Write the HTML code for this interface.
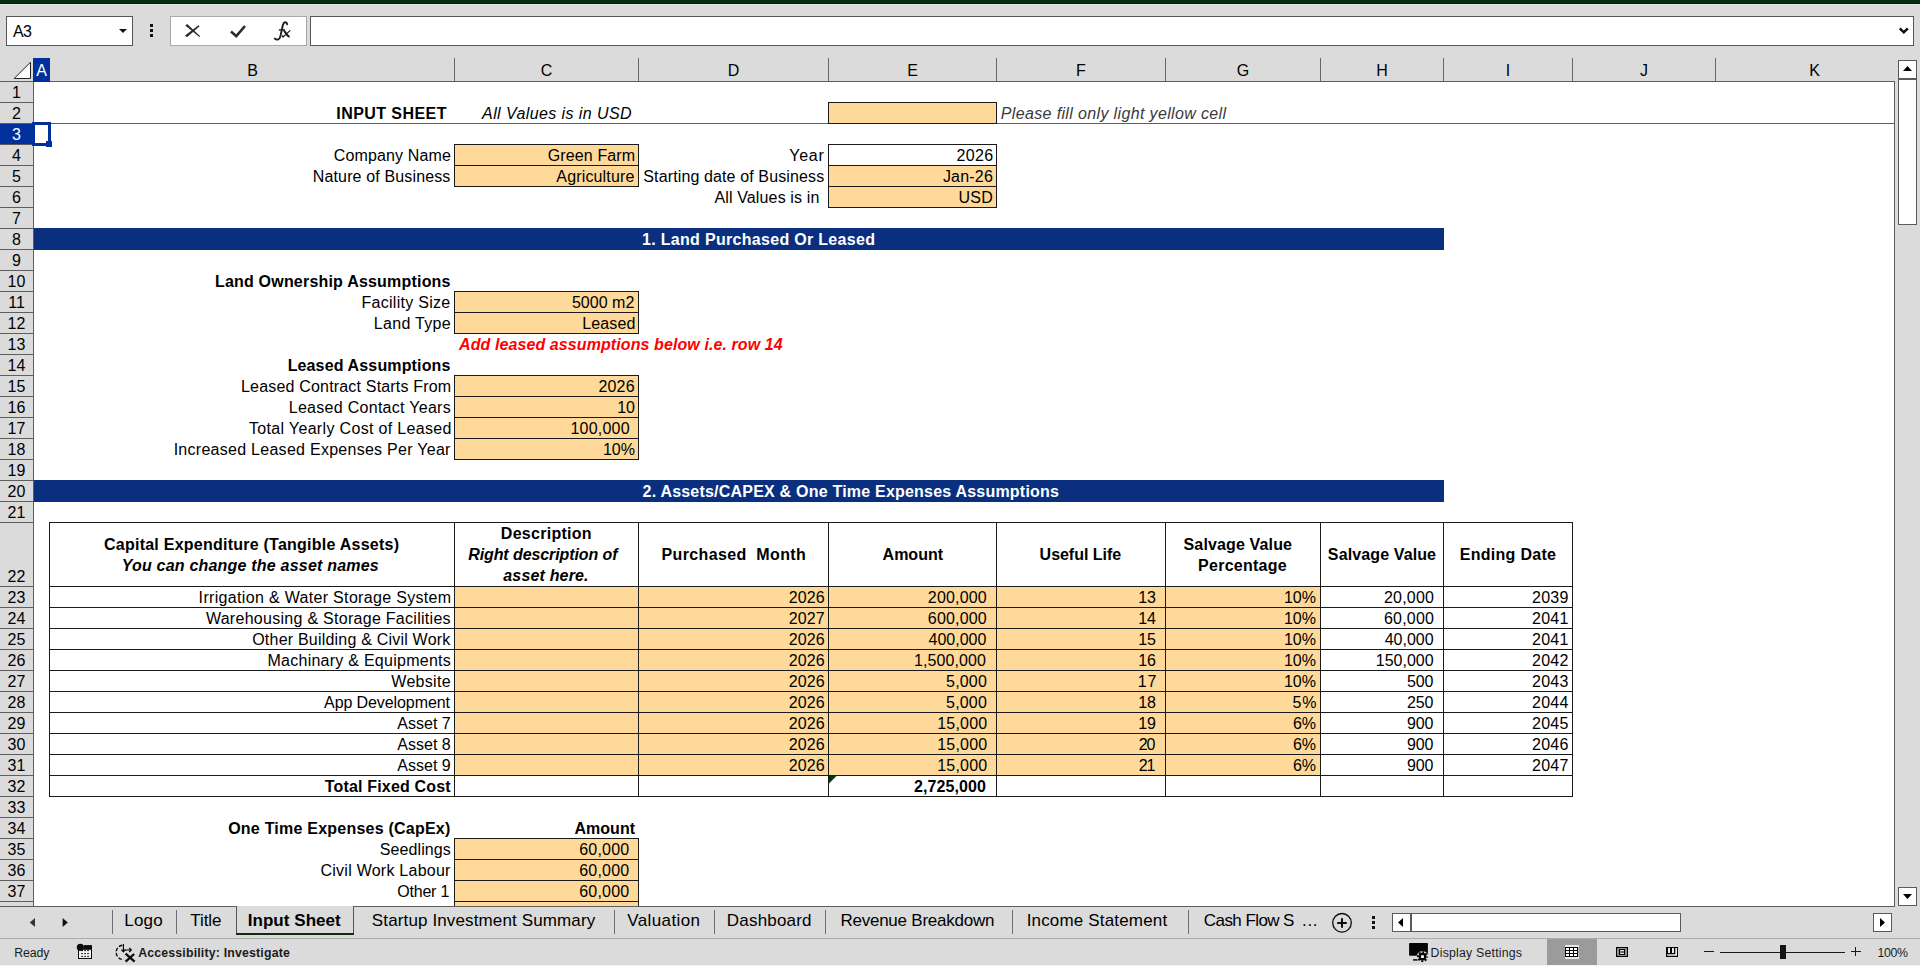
<!DOCTYPE html>
<html><head><meta charset="utf-8"><title>Input Sheet</title>
<style>
html,body{margin:0;padding:0;width:1920px;height:966px;overflow:hidden}
body{width:1920px;height:966px;overflow:hidden;background:#dbdbdb;position:relative;font-family:"Liberation Sans",sans-serif;}
body>div,body>svg{position:absolute;box-sizing:content-box}
.t{white-space:nowrap;overflow:visible}
</style></head><body>
<div style="left:0px;top:0px;width:1920px;height:3px;background:#062c12;"></div>
<div style="left:0px;top:3px;width:1920px;height:1px;background:#011d02;"></div>
<div style="left:0px;top:4px;width:1920px;height:1px;background:#e6e4e5;"></div>
<div style="left:6px;top:16px;width:125px;height:28px;border:1px solid #565656;background:#fff"></div>
<div class="t" style="left:13px;top:23px;width:40px;height:18px;line-height:18px;font-size:16px;text-align:left;color:#000;letter-spacing:-0.6px;"><span>A3</span></div>
<svg style="left:118px;top:28px" width="10" height="6" viewBox="0 0 10 6"><path d="M1 1 L9 1 L5 5 Z" fill="#111"/></svg>
<div style="left:150px;top:24px;width:3px;height:3px;background:#111;"></div>
<div style="left:150px;top:29px;width:3px;height:3px;background:#111;"></div>
<div style="left:150px;top:34px;width:3px;height:3px;background:#111;"></div>
<div style="left:170px;top:16px;width:135px;height:28px;border:1px solid #a9a9a9;background:#fff"></div>
<svg style="left:184px;top:23px" width="18" height="16" viewBox="0 0 18 16"><path d="M1.2 2.6 L3.2 0.9 L16.2 13.2 L15.4 14 Z" fill="#2b2b2b"/><path d="M14.6 2.2 L15.6 3.2 L3 14.2 L1 12.6 Z" fill="#2b2b2b"/></svg>
<svg style="left:228px;top:23px" width="20" height="17" viewBox="0 0 20 17"><path d="M3 8.5 L8.3 13.2 L17 3" stroke="#2b2b2b" stroke-width="2.6" fill="none" stroke-linecap="butt"/></svg>
<svg style="left:270px;top:18px" width="24" height="26" viewBox="0 0 24 26"><path d="M17.2 6.2 C16.6 3.4 13.7 3.6 12.9 7 L10.3 18.6 C9.5 21.9 6.8 22.3 4.8 20.6" fill="none" stroke="#1a1a1a" stroke-width="1.9" stroke-linecap="round"/><path d="M8.8 11.9 L15 11.9" stroke="#1a1a1a" stroke-width="1.3"/><path d="M13.4 12.9 C15.8 12.4 16.2 18.9 19.6 18.4" fill="none" stroke="#1a1a1a" stroke-width="2.1"/><path d="M20 12.6 L13.2 18.9" stroke="#1a1a1a" stroke-width="1.2" stroke-linecap="round"/><circle cx="12.9" cy="18.3" r="1.1" fill="#1a1a1a"/></svg>
<div style="left:310px;top:16px;width:1602px;height:28px;border:1px solid #565656;background:#fff"></div>
<svg style="left:1896px;top:26px" width="14" height="10" viewBox="0 0 14 10"><path d="M3.8 2.4 L7.8 6.4 L11.8 2.4" stroke="#0a0a0a" stroke-width="2.4" fill="none"/></svg>
<div style="left:34px;top:82px;width:1860px;height:824px;background:#fff;"></div>
<div style="left:0px;top:81px;width:1895px;height:1px;background:#5e5e5e;"></div>
<div style="left:33px;top:81px;width:1px;height:826px;background:#5e5e5e;"></div>
<div style="left:1894px;top:81px;width:1px;height:826px;background:#5e5e5e;"></div>
<div style="left:0px;top:906px;width:1895px;height:1px;background:#5e5e5e;"></div>
<div style="left:33px;top:58px;width:17px;height:24px;background:#00309c;"></div>
<div class="t" style="left:33px;top:60px;width:17px;height:22px;line-height:22px;font-size:16px;text-align:center;color:#fff;"><span>A</span></div>
<div class="t" style="left:51px;top:60px;width:403px;height:22px;line-height:22px;font-size:16px;text-align:center;color:#000;"><span>B</span></div>
<div style="left:454px;top:58px;width:1px;height:23px;background:#666;"></div>
<div class="t" style="left:455px;top:60px;width:183px;height:22px;line-height:22px;font-size:16px;text-align:center;color:#000;"><span>C</span></div>
<div style="left:638px;top:58px;width:1px;height:23px;background:#666;"></div>
<div class="t" style="left:639px;top:60px;width:189px;height:22px;line-height:22px;font-size:16px;text-align:center;color:#000;"><span>D</span></div>
<div style="left:828px;top:58px;width:1px;height:23px;background:#666;"></div>
<div class="t" style="left:829px;top:60px;width:167px;height:22px;line-height:22px;font-size:16px;text-align:center;color:#000;"><span>E</span></div>
<div style="left:996px;top:58px;width:1px;height:23px;background:#666;"></div>
<div class="t" style="left:997px;top:60px;width:168px;height:22px;line-height:22px;font-size:16px;text-align:center;color:#000;"><span>F</span></div>
<div style="left:1165px;top:58px;width:1px;height:23px;background:#666;"></div>
<div class="t" style="left:1166px;top:60px;width:154px;height:22px;line-height:22px;font-size:16px;text-align:center;color:#000;"><span>G</span></div>
<div style="left:1320px;top:58px;width:1px;height:23px;background:#666;"></div>
<div class="t" style="left:1321px;top:60px;width:122px;height:22px;line-height:22px;font-size:16px;text-align:center;color:#000;"><span>H</span></div>
<div style="left:1443px;top:58px;width:1px;height:23px;background:#666;"></div>
<div class="t" style="left:1444px;top:60px;width:128px;height:22px;line-height:22px;font-size:16px;text-align:center;color:#000;"><span>I</span></div>
<div style="left:1572px;top:58px;width:1px;height:23px;background:#666;"></div>
<div class="t" style="left:1573px;top:60px;width:142px;height:22px;line-height:22px;font-size:16px;text-align:center;color:#000;"><span>J</span></div>
<div style="left:1715px;top:58px;width:1px;height:23px;background:#666;"></div>
<div class="t" style="left:1716px;top:60px;width:197px;height:22px;line-height:22px;font-size:16px;text-align:center;color:#000;"><span>K</span></div>
<svg style="left:12px;top:60px" width="21" height="21" viewBox="0 0 21 21"><path d="M2.2 18.5 L18.5 2.2 L18.5 18.5 Z" fill="#fff" stroke="#222" stroke-width="1"/></svg>
<div style="left:0px;top:102px;width:34px;height:1px;background:#5e5e5e;"></div>
<div class="t" style="left:0px;top:82px;width:33px;height:21px;line-height:21px;font-size:16px;text-align:center;color:#000;"><span>1</span></div>
<div style="left:0px;top:123px;width:34px;height:1px;background:#5e5e5e;"></div>
<div class="t" style="left:0px;top:103px;width:33px;height:21px;line-height:21px;font-size:16px;text-align:center;color:#000;"><span>2</span></div>
<div style="left:0px;top:124px;width:34px;height:20px;background:#00309c;"></div>
<div style="left:0px;top:144px;width:34px;height:1px;background:#5f5a55;"></div>
<div class="t" style="left:0px;top:124px;width:33px;height:21px;line-height:21px;font-size:16px;text-align:center;color:#fff;"><span>3</span></div>
<div style="left:0px;top:165px;width:34px;height:1px;background:#5e5e5e;"></div>
<div class="t" style="left:0px;top:145px;width:33px;height:21px;line-height:21px;font-size:16px;text-align:center;color:#000;"><span>4</span></div>
<div style="left:0px;top:186px;width:34px;height:1px;background:#5e5e5e;"></div>
<div class="t" style="left:0px;top:166px;width:33px;height:21px;line-height:21px;font-size:16px;text-align:center;color:#000;"><span>5</span></div>
<div style="left:0px;top:207px;width:34px;height:1px;background:#5e5e5e;"></div>
<div class="t" style="left:0px;top:187px;width:33px;height:21px;line-height:21px;font-size:16px;text-align:center;color:#000;"><span>6</span></div>
<div style="left:0px;top:228px;width:34px;height:1px;background:#5e5e5e;"></div>
<div class="t" style="left:0px;top:208px;width:33px;height:21px;line-height:21px;font-size:16px;text-align:center;color:#000;"><span>7</span></div>
<div style="left:0px;top:249px;width:34px;height:1px;background:#5e5e5e;"></div>
<div class="t" style="left:0px;top:229px;width:33px;height:21px;line-height:21px;font-size:16px;text-align:center;color:#000;"><span>8</span></div>
<div style="left:0px;top:270px;width:34px;height:1px;background:#5e5e5e;"></div>
<div class="t" style="left:0px;top:250px;width:33px;height:21px;line-height:21px;font-size:16px;text-align:center;color:#000;"><span>9</span></div>
<div style="left:0px;top:291px;width:34px;height:1px;background:#5e5e5e;"></div>
<div class="t" style="left:0px;top:271px;width:33px;height:21px;line-height:21px;font-size:16px;text-align:center;color:#000;"><span>10</span></div>
<div style="left:0px;top:312px;width:34px;height:1px;background:#5e5e5e;"></div>
<div class="t" style="left:0px;top:292px;width:33px;height:21px;line-height:21px;font-size:16px;text-align:center;color:#000;"><span>11</span></div>
<div style="left:0px;top:333px;width:34px;height:1px;background:#5e5e5e;"></div>
<div class="t" style="left:0px;top:313px;width:33px;height:21px;line-height:21px;font-size:16px;text-align:center;color:#000;"><span>12</span></div>
<div style="left:0px;top:354px;width:34px;height:1px;background:#5e5e5e;"></div>
<div class="t" style="left:0px;top:334px;width:33px;height:21px;line-height:21px;font-size:16px;text-align:center;color:#000;"><span>13</span></div>
<div style="left:0px;top:375px;width:34px;height:1px;background:#5e5e5e;"></div>
<div class="t" style="left:0px;top:355px;width:33px;height:21px;line-height:21px;font-size:16px;text-align:center;color:#000;"><span>14</span></div>
<div style="left:0px;top:396px;width:34px;height:1px;background:#5e5e5e;"></div>
<div class="t" style="left:0px;top:376px;width:33px;height:21px;line-height:21px;font-size:16px;text-align:center;color:#000;"><span>15</span></div>
<div style="left:0px;top:417px;width:34px;height:1px;background:#5e5e5e;"></div>
<div class="t" style="left:0px;top:397px;width:33px;height:21px;line-height:21px;font-size:16px;text-align:center;color:#000;"><span>16</span></div>
<div style="left:0px;top:438px;width:34px;height:1px;background:#5e5e5e;"></div>
<div class="t" style="left:0px;top:418px;width:33px;height:21px;line-height:21px;font-size:16px;text-align:center;color:#000;"><span>17</span></div>
<div style="left:0px;top:459px;width:34px;height:1px;background:#5e5e5e;"></div>
<div class="t" style="left:0px;top:439px;width:33px;height:21px;line-height:21px;font-size:16px;text-align:center;color:#000;"><span>18</span></div>
<div style="left:0px;top:480px;width:34px;height:1px;background:#5e5e5e;"></div>
<div class="t" style="left:0px;top:460px;width:33px;height:21px;line-height:21px;font-size:16px;text-align:center;color:#000;"><span>19</span></div>
<div style="left:0px;top:501px;width:34px;height:1px;background:#5e5e5e;"></div>
<div class="t" style="left:0px;top:481px;width:33px;height:21px;line-height:21px;font-size:16px;text-align:center;color:#000;"><span>20</span></div>
<div style="left:0px;top:522px;width:34px;height:1px;background:#5e5e5e;"></div>
<div class="t" style="left:0px;top:502px;width:33px;height:21px;line-height:21px;font-size:16px;text-align:center;color:#000;"><span>21</span></div>
<div style="left:0px;top:586px;width:34px;height:1px;background:#5e5e5e;"></div>
<div class="t" style="left:0px;top:566px;width:33px;height:21px;line-height:21px;font-size:16px;text-align:center;color:#000;"><span>22</span></div>
<div style="left:0px;top:607px;width:34px;height:1px;background:#5e5e5e;"></div>
<div class="t" style="left:0px;top:587px;width:33px;height:21px;line-height:21px;font-size:16px;text-align:center;color:#000;"><span>23</span></div>
<div style="left:0px;top:628px;width:34px;height:1px;background:#5e5e5e;"></div>
<div class="t" style="left:0px;top:608px;width:33px;height:21px;line-height:21px;font-size:16px;text-align:center;color:#000;"><span>24</span></div>
<div style="left:0px;top:649px;width:34px;height:1px;background:#5e5e5e;"></div>
<div class="t" style="left:0px;top:629px;width:33px;height:21px;line-height:21px;font-size:16px;text-align:center;color:#000;"><span>25</span></div>
<div style="left:0px;top:670px;width:34px;height:1px;background:#5e5e5e;"></div>
<div class="t" style="left:0px;top:650px;width:33px;height:21px;line-height:21px;font-size:16px;text-align:center;color:#000;"><span>26</span></div>
<div style="left:0px;top:691px;width:34px;height:1px;background:#5e5e5e;"></div>
<div class="t" style="left:0px;top:671px;width:33px;height:21px;line-height:21px;font-size:16px;text-align:center;color:#000;"><span>27</span></div>
<div style="left:0px;top:712px;width:34px;height:1px;background:#5e5e5e;"></div>
<div class="t" style="left:0px;top:692px;width:33px;height:21px;line-height:21px;font-size:16px;text-align:center;color:#000;"><span>28</span></div>
<div style="left:0px;top:733px;width:34px;height:1px;background:#5e5e5e;"></div>
<div class="t" style="left:0px;top:713px;width:33px;height:21px;line-height:21px;font-size:16px;text-align:center;color:#000;"><span>29</span></div>
<div style="left:0px;top:754px;width:34px;height:1px;background:#5e5e5e;"></div>
<div class="t" style="left:0px;top:734px;width:33px;height:21px;line-height:21px;font-size:16px;text-align:center;color:#000;"><span>30</span></div>
<div style="left:0px;top:775px;width:34px;height:1px;background:#5e5e5e;"></div>
<div class="t" style="left:0px;top:755px;width:33px;height:21px;line-height:21px;font-size:16px;text-align:center;color:#000;"><span>31</span></div>
<div style="left:0px;top:796px;width:34px;height:1px;background:#5e5e5e;"></div>
<div class="t" style="left:0px;top:776px;width:33px;height:21px;line-height:21px;font-size:16px;text-align:center;color:#000;"><span>32</span></div>
<div style="left:0px;top:817px;width:34px;height:1px;background:#5e5e5e;"></div>
<div class="t" style="left:0px;top:797px;width:33px;height:21px;line-height:21px;font-size:16px;text-align:center;color:#000;"><span>33</span></div>
<div style="left:0px;top:838px;width:34px;height:1px;background:#5e5e5e;"></div>
<div class="t" style="left:0px;top:818px;width:33px;height:21px;line-height:21px;font-size:16px;text-align:center;color:#000;"><span>34</span></div>
<div style="left:0px;top:859px;width:34px;height:1px;background:#5e5e5e;"></div>
<div class="t" style="left:0px;top:839px;width:33px;height:21px;line-height:21px;font-size:16px;text-align:center;color:#000;"><span>35</span></div>
<div style="left:0px;top:880px;width:34px;height:1px;background:#5e5e5e;"></div>
<div class="t" style="left:0px;top:860px;width:33px;height:21px;line-height:21px;font-size:16px;text-align:center;color:#000;"><span>36</span></div>
<div style="left:0px;top:901px;width:34px;height:1px;background:#5e5e5e;"></div>
<div class="t" style="left:0px;top:881px;width:33px;height:21px;line-height:21px;font-size:16px;text-align:center;color:#000;"><span>37</span></div>
<div class="t" style="left:0px;top:902px;width:33px;height:21px;line-height:21px;font-size:16px;text-align:center;color:#000;clip-path:inset(0 0 17px 0);"><span>38</span></div>
<div style="left:34px;top:123px;width:1860px;height:1px;background:#5f5f5f;"></div>
<div class="t" style="left:45.9px;top:103px;width:401px;height:21px;line-height:21px;font-size:16px;text-align:right;color:#000;font-weight:bold;letter-spacing:0.44px;"><span>INPUT SHEET</span></div>
<div class="t" style="left:482.05px;top:103px;width:200px;height:21px;line-height:21px;font-size:16px;text-align:left;color:#000;font-style:italic;letter-spacing:0.416px;"><span>All Values is in USD</span></div>
<div style="left:829px;top:103px;width:167px;height:20px;background:#fed999;"></div>
<div style="left:828px;top:102px;width:169px;height:1px;background:#1a1a1a;"></div>
<div style="left:828px;top:123px;width:169px;height:1px;background:#1a1a1a;"></div>
<div style="left:828px;top:102px;width:1px;height:22px;background:#1a1a1a;"></div>
<div style="left:996px;top:102px;width:1px;height:22px;background:#1a1a1a;"></div>
<div class="t" style="left:1000.75px;top:103px;width:600px;height:21px;line-height:21px;font-size:16px;text-align:left;color:#3a3a3a;font-style:italic;letter-spacing:0.361px;"><span>Please fill only light yellow cell</span></div>
<div class="t" style="left:50.0px;top:145px;width:401px;height:21px;line-height:21px;font-size:16px;text-align:right;color:#000;letter-spacing:0.127px;"><span>Company Name</span></div>
<div style="left:455px;top:145px;width:183px;height:20px;background:#fed999;"></div>
<div style="left:454px;top:144px;width:185px;height:1px;background:#1a1a1a;"></div>
<div style="left:454px;top:165px;width:185px;height:1px;background:#1a1a1a;"></div>
<div style="left:454px;top:144px;width:1px;height:22px;background:#1a1a1a;"></div>
<div style="left:638px;top:144px;width:1px;height:22px;background:#1a1a1a;"></div>
<div class="t" style="left:454.25px;top:145px;width:181px;height:21px;line-height:21px;font-size:16px;text-align:right;color:#000;letter-spacing:0.122px;"><span>Green Farm</span></div>
<div class="t" style="left:49.5px;top:166px;width:401px;height:21px;line-height:21px;font-size:16px;text-align:right;color:#000;letter-spacing:0.141px;"><span>Nature of Business</span></div>
<div style="left:455px;top:166px;width:183px;height:20px;background:#fed999;"></div>
<div style="left:454px;top:165px;width:185px;height:1px;background:#1a1a1a;"></div>
<div style="left:454px;top:186px;width:185px;height:1px;background:#1a1a1a;"></div>
<div style="left:454px;top:165px;width:1px;height:22px;background:#1a1a1a;"></div>
<div style="left:638px;top:165px;width:1px;height:22px;background:#1a1a1a;"></div>
<div class="t" style="left:453.52px;top:166px;width:181px;height:21px;line-height:21px;font-size:16px;text-align:right;color:#000;letter-spacing:0.155px;"><span>Agriculture</span></div>
<div class="t" style="left:637.65px;top:145px;width:187px;height:21px;line-height:21px;font-size:16px;text-align:right;color:#000;letter-spacing:0.767px;"><span>Year</span></div>
<div style="left:828px;top:144px;width:169px;height:1px;background:#1a1a1a;"></div>
<div style="left:828px;top:165px;width:169px;height:1px;background:#1a1a1a;"></div>
<div style="left:828px;top:144px;width:1px;height:22px;background:#1a1a1a;"></div>
<div style="left:996px;top:144px;width:1px;height:22px;background:#1a1a1a;"></div>
<div class="t" style="left:828.5px;top:145px;width:165px;height:21px;line-height:21px;font-size:16px;text-align:right;color:#000;letter-spacing:0.333px;"><span>2026</span></div>
<div class="t" style="left:637.3px;top:166px;width:187px;height:21px;line-height:21px;font-size:16px;text-align:right;color:#000;letter-spacing:0.125px;"><span>Starting date of Business</span></div>
<div style="left:829px;top:166px;width:167px;height:20px;background:#fed999;"></div>
<div style="left:828px;top:165px;width:169px;height:1px;background:#1a1a1a;"></div>
<div style="left:828px;top:186px;width:169px;height:1px;background:#1a1a1a;"></div>
<div style="left:828px;top:165px;width:1px;height:22px;background:#1a1a1a;"></div>
<div style="left:996px;top:165px;width:1px;height:22px;background:#1a1a1a;"></div>
<div class="t" style="left:828.0px;top:166px;width:165px;height:21px;line-height:21px;font-size:16px;text-align:right;color:#000;letter-spacing:0.2px;"><span>Jan-26</span></div>
<div class="t" style="left:637.15px;top:187px;width:187px;height:21px;line-height:21px;font-size:16px;text-align:right;color:#000;letter-spacing:0.144px;white-space:pre;"><span>All Values is in&nbsp;</span></div>
<div style="left:829px;top:187px;width:167px;height:20px;background:#fed999;"></div>
<div style="left:828px;top:186px;width:169px;height:1px;background:#1a1a1a;"></div>
<div style="left:828px;top:207px;width:169px;height:1px;background:#1a1a1a;"></div>
<div style="left:828px;top:186px;width:1px;height:22px;background:#1a1a1a;"></div>
<div style="left:996px;top:186px;width:1px;height:22px;background:#1a1a1a;"></div>
<div class="t" style="left:828.2px;top:187px;width:165px;height:21px;line-height:21px;font-size:16px;text-align:right;color:#000;letter-spacing:0.3px;"><span>USD</span></div>
<div style="left:34px;top:228px;width:1410px;height:22px;background:#0a2f7f;"></div>
<div class="t" style="left:642.05px;top:229px;width:600px;height:21px;line-height:21px;font-size:16px;text-align:left;color:#fff;font-weight:bold;letter-spacing:0.304px;"><span>1. Land Purchased Or Leased</span></div>
<div style="left:34px;top:480px;width:1410px;height:22px;background:#0a2f7f;"></div>
<div class="t" style="left:642.55px;top:481px;width:600px;height:21px;line-height:21px;font-size:16px;text-align:left;color:#fff;font-weight:bold;letter-spacing:0.211px;"><span>2. Assets/CAPEX &amp; One Time Expenses Assumptions</span></div>
<div class="t" style="left:49.7px;top:271px;width:401px;height:21px;line-height:21px;font-size:16px;text-align:right;color:#000;font-weight:bold;letter-spacing:0.2px;"><span>Land Ownership Assumptions</span></div>
<div class="t" style="left:49.5px;top:292px;width:401px;height:21px;line-height:21px;font-size:16px;text-align:right;color:#000;letter-spacing:0.283px;"><span>Facility Size</span></div>
<div style="left:455px;top:292px;width:183px;height:20px;background:#fed999;"></div>
<div style="left:454px;top:291px;width:185px;height:1px;background:#1a1a1a;"></div>
<div style="left:454px;top:312px;width:185px;height:1px;background:#1a1a1a;"></div>
<div style="left:454px;top:291px;width:1px;height:22px;background:#1a1a1a;"></div>
<div style="left:638px;top:291px;width:1px;height:22px;background:#1a1a1a;"></div>
<div class="t" style="left:453.4px;top:292px;width:181px;height:21px;line-height:21px;font-size:16px;text-align:right;color:#000;letter-spacing:0.033px;"><span>5000 m2</span></div>
<div class="t" style="left:50.0px;top:313px;width:401px;height:21px;line-height:21px;font-size:16px;text-align:right;color:#000;letter-spacing:0.3px;"><span>Land Type</span></div>
<div style="left:455px;top:313px;width:183px;height:20px;background:#fed999;"></div>
<div style="left:454px;top:312px;width:185px;height:1px;background:#1a1a1a;"></div>
<div style="left:454px;top:333px;width:185px;height:1px;background:#1a1a1a;"></div>
<div style="left:454px;top:312px;width:1px;height:22px;background:#1a1a1a;"></div>
<div style="left:638px;top:312px;width:1px;height:22px;background:#1a1a1a;"></div>
<div class="t" style="left:454.6px;top:313px;width:181px;height:21px;line-height:21px;font-size:16px;text-align:right;color:#000;letter-spacing:0.16px;"><span>Leased</span></div>
<div class="t" style="left:459.0px;top:334px;width:600px;height:21px;line-height:21px;font-size:16px;text-align:left;color:#ff0000;font-weight:bold;font-style:italic;letter-spacing:0.092px;"><span>Add leased assumptions below i.e. row 14</span></div>
<div class="t" style="left:49.5px;top:355px;width:401px;height:21px;line-height:21px;font-size:16px;text-align:right;color:#000;font-weight:bold;letter-spacing:0.141px;"><span>Leased Assumptions</span></div>
<div class="t" style="left:50.35px;top:376px;width:401px;height:21px;line-height:21px;font-size:16px;text-align:right;color:#000;letter-spacing:0.181px;"><span>Leased Contract Starts From</span></div>
<div style="left:455px;top:376px;width:183px;height:20px;background:#fed999;"></div>
<div style="left:454px;top:375px;width:185px;height:1px;background:#1a1a1a;"></div>
<div style="left:454px;top:396px;width:185px;height:1px;background:#1a1a1a;"></div>
<div style="left:454px;top:375px;width:1px;height:22px;background:#1a1a1a;"></div>
<div style="left:638px;top:375px;width:1px;height:22px;background:#1a1a1a;"></div>
<div class="t" style="left:453.75px;top:376px;width:181px;height:21px;line-height:21px;font-size:16px;text-align:right;color:#000;letter-spacing:0.167px;"><span>2026</span></div>
<div class="t" style="left:50.0px;top:397px;width:401px;height:21px;line-height:21px;font-size:16px;text-align:right;color:#000;letter-spacing:0.284px;"><span>Leased Contact Years</span></div>
<div style="left:455px;top:397px;width:183px;height:20px;background:#fed999;"></div>
<div style="left:454px;top:396px;width:185px;height:1px;background:#1a1a1a;"></div>
<div style="left:454px;top:417px;width:185px;height:1px;background:#1a1a1a;"></div>
<div style="left:454px;top:396px;width:1px;height:22px;background:#1a1a1a;"></div>
<div style="left:638px;top:396px;width:1px;height:22px;background:#1a1a1a;"></div>
<div class="t" style="left:454px;top:397px;width:181px;height:21px;line-height:21px;font-size:16px;text-align:right;color:#000;"><span>10</span></div>
<div class="t" style="left:50.85px;top:418px;width:401px;height:21px;line-height:21px;font-size:16px;text-align:right;color:#000;letter-spacing:0.335px;"><span>Total Yearly Cost of Leased</span></div>
<div style="left:455px;top:418px;width:183px;height:20px;background:#fed999;"></div>
<div style="left:454px;top:417px;width:185px;height:1px;background:#1a1a1a;"></div>
<div style="left:454px;top:438px;width:185px;height:1px;background:#1a1a1a;"></div>
<div style="left:454px;top:417px;width:1px;height:22px;background:#1a1a1a;"></div>
<div style="left:638px;top:417px;width:1px;height:22px;background:#1a1a1a;"></div>
<div class="t" style="left:454.15px;top:418px;width:175.66999999999996px;height:21px;line-height:21px;font-size:16px;text-align:right;color:#000;letter-spacing:0.217px;"><span>100,000</span></div>
<div class="t" style="left:49.7px;top:439px;width:401px;height:21px;line-height:21px;font-size:16px;text-align:right;color:#000;letter-spacing:0.273px;"><span>Increased Leased Expenses Per Year</span></div>
<div style="left:455px;top:439px;width:183px;height:20px;background:#fed999;"></div>
<div style="left:454px;top:438px;width:185px;height:1px;background:#1a1a1a;"></div>
<div style="left:454px;top:459px;width:185px;height:1px;background:#1a1a1a;"></div>
<div style="left:454px;top:438px;width:1px;height:22px;background:#1a1a1a;"></div>
<div style="left:638px;top:438px;width:1px;height:22px;background:#1a1a1a;"></div>
<div class="t" style="left:454px;top:439px;width:181px;height:21px;line-height:21px;font-size:16px;text-align:right;color:#000;"><span>10%</span></div>
<div style="left:455px;top:587px;width:865px;height:188px;background:#fed999;"></div>
<div style="left:49px;top:522px;width:1524px;height:1px;background:#1a1a1a;"></div>
<div style="left:49px;top:586px;width:1524px;height:1px;background:#1a1a1a;"></div>
<div style="left:49px;top:607px;width:1524px;height:1px;background:#1a1a1a;"></div>
<div style="left:49px;top:628px;width:1524px;height:1px;background:#1a1a1a;"></div>
<div style="left:49px;top:649px;width:1524px;height:1px;background:#1a1a1a;"></div>
<div style="left:49px;top:670px;width:1524px;height:1px;background:#1a1a1a;"></div>
<div style="left:49px;top:691px;width:1524px;height:1px;background:#1a1a1a;"></div>
<div style="left:49px;top:712px;width:1524px;height:1px;background:#1a1a1a;"></div>
<div style="left:49px;top:733px;width:1524px;height:1px;background:#1a1a1a;"></div>
<div style="left:49px;top:754px;width:1524px;height:1px;background:#1a1a1a;"></div>
<div style="left:49px;top:775px;width:1524px;height:1px;background:#1a1a1a;"></div>
<div style="left:49px;top:796px;width:1524px;height:1px;background:#1a1a1a;"></div>
<div style="left:49px;top:522px;width:1px;height:275px;background:#1a1a1a;"></div>
<div style="left:454px;top:522px;width:1px;height:275px;background:#1a1a1a;"></div>
<div style="left:638px;top:522px;width:1px;height:275px;background:#1a1a1a;"></div>
<div style="left:828px;top:522px;width:1px;height:275px;background:#1a1a1a;"></div>
<div style="left:996px;top:522px;width:1px;height:275px;background:#1a1a1a;"></div>
<div style="left:1165px;top:522px;width:1px;height:275px;background:#1a1a1a;"></div>
<div style="left:1320px;top:522px;width:1px;height:275px;background:#1a1a1a;"></div>
<div style="left:1443px;top:522px;width:1px;height:275px;background:#1a1a1a;"></div>
<div style="left:1572px;top:522px;width:1px;height:275px;background:#1a1a1a;"></div>
<div class="t" style="left:49.65px;top:534px;width:404px;height:21px;line-height:21px;font-size:16px;text-align:center;color:#000;font-weight:bold;letter-spacing:0.242px;white-space:pre;"><span>Capital Expenditure (Tangible Assets)</span></div>
<div class="t" style="left:48.3px;top:555px;width:404px;height:21px;line-height:21px;font-size:16px;text-align:center;color:#000;font-weight:bold;font-style:italic;letter-spacing:0.207px;white-space:pre;"><span>You can change the asset names</span></div>
<div class="t" style="left:454.85px;top:523px;width:183px;height:21px;line-height:21px;font-size:16px;text-align:center;color:#000;font-weight:bold;letter-spacing:0.27px;white-space:pre;"><span>Description</span></div>
<div class="t" style="left:451.35px;top:544px;width:183px;height:21px;line-height:21px;font-size:16px;text-align:center;color:#000;font-weight:bold;font-style:italic;letter-spacing:-0.089px;white-space:pre;"><span>Right description of</span></div>
<div class="t" style="left:454.5px;top:565px;width:183px;height:21px;line-height:21px;font-size:16px;text-align:center;color:#000;font-weight:bold;font-style:italic;letter-spacing:0.16px;white-space:pre;"><span>asset here.</span></div>
<div class="t" style="left:639.35px;top:544px;width:189px;height:21px;line-height:21px;font-size:16px;text-align:center;color:#000;font-weight:bold;letter-spacing:0.38px;white-space:pre;"><span>Purchased  Month</span></div>
<div class="t" style="left:829.3px;top:544px;width:167px;height:21px;line-height:21px;font-size:16px;text-align:center;color:#000;font-weight:bold;white-space:pre;"><span>Amount</span></div>
<div class="t" style="left:996.35px;top:544px;width:168px;height:21px;line-height:21px;font-size:16px;text-align:center;color:#000;font-weight:bold;letter-spacing:-0.03px;white-space:pre;"><span>Useful Life</span></div>
<div class="t" style="left:1160.85px;top:534px;width:154px;height:21px;line-height:21px;font-size:16px;text-align:center;color:#000;font-weight:bold;letter-spacing:0.142px;white-space:pre;"><span>Salvage Value</span></div>
<div class="t" style="left:1165.5px;top:555px;width:154px;height:21px;line-height:21px;font-size:16px;text-align:center;color:#000;font-weight:bold;letter-spacing:0.267px;white-space:pre;"><span>Percentage</span></div>
<div class="t" style="left:1321.0px;top:544px;width:122px;height:21px;line-height:21px;font-size:16px;text-align:center;color:#000;font-weight:bold;letter-spacing:0.117px;white-space:pre;"><span>Salvage Value</span></div>
<div class="t" style="left:1444.0px;top:544px;width:128px;height:21px;line-height:21px;font-size:16px;text-align:center;color:#000;font-weight:bold;letter-spacing:0.3px;white-space:pre;"><span>Ending Date</span></div>
<div class="t" style="left:50.5px;top:587px;width:401px;height:21px;line-height:21px;font-size:16px;text-align:right;color:#000;letter-spacing:0.325px;"><span>Irrigation &amp; Water Storage System</span></div>
<div class="t" style="left:637.65px;top:587px;width:187px;height:21px;line-height:21px;font-size:16px;text-align:right;color:#000;letter-spacing:0.1px;"><span>2026</span></div>
<div class="t" style="left:827.2px;top:587px;width:159.66999999999996px;height:21px;line-height:21px;font-size:16px;text-align:right;color:#000;letter-spacing:0.167px;"><span>200,000</span></div>
<div class="t" style="left:994.85px;top:587px;width:160.67000000000007px;height:21px;line-height:21px;font-size:16px;text-align:right;color:#000;letter-spacing:-0.3px;"><span>13</span></div>
<div class="t" style="left:1164.0px;top:587px;width:152px;height:21px;line-height:21px;font-size:16px;text-align:right;color:#000;"><span>10%</span></div>
<div class="t" style="left:1319.5px;top:587px;width:114.67000000000007px;height:21px;line-height:21px;font-size:16px;text-align:right;color:#000;letter-spacing:0.2px;"><span>20,000</span></div>
<div class="t" style="left:1442.5px;top:587px;width:126px;height:21px;line-height:21px;font-size:16px;text-align:right;color:#000;letter-spacing:0.2px;"><span>2039</span></div>
<div class="t" style="left:49.85px;top:608px;width:401px;height:21px;line-height:21px;font-size:16px;text-align:right;color:#000;letter-spacing:0.281px;"><span>Warehousing &amp; Storage Facilities</span></div>
<div class="t" style="left:637.65px;top:608px;width:187px;height:21px;line-height:21px;font-size:16px;text-align:right;color:#000;letter-spacing:0.1px;"><span>2027</span></div>
<div class="t" style="left:827.2px;top:608px;width:159.66999999999996px;height:21px;line-height:21px;font-size:16px;text-align:right;color:#000;letter-spacing:0.167px;"><span>600,000</span></div>
<div class="t" style="left:994.85px;top:608px;width:160.67000000000007px;height:21px;line-height:21px;font-size:16px;text-align:right;color:#000;letter-spacing:-0.3px;"><span>14</span></div>
<div class="t" style="left:1164.0px;top:608px;width:152px;height:21px;line-height:21px;font-size:16px;text-align:right;color:#000;"><span>10%</span></div>
<div class="t" style="left:1319.5px;top:608px;width:114.67000000000007px;height:21px;line-height:21px;font-size:16px;text-align:right;color:#000;letter-spacing:0.2px;"><span>60,000</span></div>
<div class="t" style="left:1442.5px;top:608px;width:126px;height:21px;line-height:21px;font-size:16px;text-align:right;color:#000;letter-spacing:0.2px;"><span>2041</span></div>
<div class="t" style="left:49.5px;top:629px;width:401px;height:21px;line-height:21px;font-size:16px;text-align:right;color:#000;letter-spacing:0.208px;"><span>Other Building &amp; Civil Work</span></div>
<div class="t" style="left:637.65px;top:629px;width:187px;height:21px;line-height:21px;font-size:16px;text-align:right;color:#000;letter-spacing:0.1px;"><span>2026</span></div>
<div class="t" style="left:826.7px;top:629px;width:159.66999999999996px;height:21px;line-height:21px;font-size:16px;text-align:right;color:#000;"><span>400,000</span></div>
<div class="t" style="left:994.85px;top:629px;width:160.67000000000007px;height:21px;line-height:21px;font-size:16px;text-align:right;color:#000;letter-spacing:-0.3px;"><span>15</span></div>
<div class="t" style="left:1164.0px;top:629px;width:152px;height:21px;line-height:21px;font-size:16px;text-align:right;color:#000;"><span>10%</span></div>
<div class="t" style="left:1319.0px;top:629px;width:114.67000000000007px;height:21px;line-height:21px;font-size:16px;text-align:right;color:#000;"><span>40,000</span></div>
<div class="t" style="left:1442.5px;top:629px;width:126px;height:21px;line-height:21px;font-size:16px;text-align:right;color:#000;letter-spacing:0.2px;"><span>2041</span></div>
<div class="t" style="left:50.0px;top:650px;width:401px;height:21px;line-height:21px;font-size:16px;text-align:right;color:#000;letter-spacing:0.257px;"><span>Machinary &amp; Equipments</span></div>
<div class="t" style="left:637.65px;top:650px;width:187px;height:21px;line-height:21px;font-size:16px;text-align:right;color:#000;letter-spacing:0.1px;"><span>2026</span></div>
<div class="t" style="left:826.35px;top:650px;width:159.66999999999996px;height:21px;line-height:21px;font-size:16px;text-align:right;color:#000;letter-spacing:0.088px;"><span>1,500,000</span></div>
<div class="t" style="left:994.85px;top:650px;width:160.67000000000007px;height:21px;line-height:21px;font-size:16px;text-align:right;color:#000;letter-spacing:-0.3px;"><span>16</span></div>
<div class="t" style="left:1164.0px;top:650px;width:152px;height:21px;line-height:21px;font-size:16px;text-align:right;color:#000;"><span>10%</span></div>
<div class="t" style="left:1319.0px;top:650px;width:114.67000000000007px;height:21px;line-height:21px;font-size:16px;text-align:right;color:#000;"><span>150,000</span></div>
<div class="t" style="left:1442.5px;top:650px;width:126px;height:21px;line-height:21px;font-size:16px;text-align:right;color:#000;letter-spacing:0.2px;"><span>2042</span></div>
<div class="t" style="left:49.85px;top:671px;width:401px;height:21px;line-height:21px;font-size:16px;text-align:right;color:#000;letter-spacing:0.283px;"><span>Website</span></div>
<div class="t" style="left:637.65px;top:671px;width:187px;height:21px;line-height:21px;font-size:16px;text-align:right;color:#000;letter-spacing:0.1px;"><span>2026</span></div>
<div class="t" style="left:827.35px;top:671px;width:159.66999999999996px;height:21px;line-height:21px;font-size:16px;text-align:right;color:#000;letter-spacing:0.175px;"><span>5,000</span></div>
<div class="t" style="left:996.35px;top:671px;width:160.67000000000007px;height:21px;line-height:21px;font-size:16px;text-align:right;color:#000;letter-spacing:0.7px;"><span>17</span></div>
<div class="t" style="left:1164.0px;top:671px;width:152px;height:21px;line-height:21px;font-size:16px;text-align:right;color:#000;"><span>10%</span></div>
<div class="t" style="left:1318.65px;top:671px;width:114.67000000000007px;height:21px;line-height:21px;font-size:16px;text-align:right;color:#000;letter-spacing:-0.15px;"><span>500</span></div>
<div class="t" style="left:1442.5px;top:671px;width:126px;height:21px;line-height:21px;font-size:16px;text-align:right;color:#000;letter-spacing:0.2px;"><span>2043</span></div>
<div class="t" style="left:48.85px;top:692px;width:401px;height:21px;line-height:21px;font-size:16px;text-align:right;color:#000;letter-spacing:-0.093px;"><span>App Development</span></div>
<div class="t" style="left:637.65px;top:692px;width:187px;height:21px;line-height:21px;font-size:16px;text-align:right;color:#000;letter-spacing:0.1px;"><span>2026</span></div>
<div class="t" style="left:827.35px;top:692px;width:159.66999999999996px;height:21px;line-height:21px;font-size:16px;text-align:right;color:#000;letter-spacing:0.175px;"><span>5,000</span></div>
<div class="t" style="left:994.85px;top:692px;width:160.67000000000007px;height:21px;line-height:21px;font-size:16px;text-align:right;color:#000;letter-spacing:-0.3px;"><span>18</span></div>
<div class="t" style="left:1165.15px;top:692px;width:152px;height:21px;line-height:21px;font-size:16px;text-align:right;color:#000;letter-spacing:0.7px;"><span>5%</span></div>
<div class="t" style="left:1318.65px;top:692px;width:114.67000000000007px;height:21px;line-height:21px;font-size:16px;text-align:right;color:#000;letter-spacing:-0.15px;"><span>250</span></div>
<div class="t" style="left:1442.5px;top:692px;width:126px;height:21px;line-height:21px;font-size:16px;text-align:right;color:#000;letter-spacing:0.2px;"><span>2044</span></div>
<div class="t" style="left:49.7px;top:713px;width:401px;height:21px;line-height:21px;font-size:16px;text-align:right;color:#000;"><span>Asset 7</span></div>
<div class="t" style="left:637.65px;top:713px;width:187px;height:21px;line-height:21px;font-size:16px;text-align:right;color:#000;letter-spacing:0.1px;"><span>2026</span></div>
<div class="t" style="left:827.7px;top:713px;width:159.66999999999996px;height:21px;line-height:21px;font-size:16px;text-align:right;color:#000;letter-spacing:0.2px;"><span>15,000</span></div>
<div class="t" style="left:994.85px;top:713px;width:160.67000000000007px;height:21px;line-height:21px;font-size:16px;text-align:right;color:#000;letter-spacing:-0.3px;"><span>19</span></div>
<div class="t" style="left:1163.65px;top:713px;width:152px;height:21px;line-height:21px;font-size:16px;text-align:right;color:#000;letter-spacing:-0.3px;"><span>6%</span></div>
<div class="t" style="left:1318.65px;top:713px;width:114.67000000000007px;height:21px;line-height:21px;font-size:16px;text-align:right;color:#000;letter-spacing:-0.15px;"><span>900</span></div>
<div class="t" style="left:1442.5px;top:713px;width:126px;height:21px;line-height:21px;font-size:16px;text-align:right;color:#000;letter-spacing:0.2px;"><span>2045</span></div>
<div class="t" style="left:49.7px;top:734px;width:401px;height:21px;line-height:21px;font-size:16px;text-align:right;color:#000;"><span>Asset 8</span></div>
<div class="t" style="left:637.65px;top:734px;width:187px;height:21px;line-height:21px;font-size:16px;text-align:right;color:#000;letter-spacing:0.1px;"><span>2026</span></div>
<div class="t" style="left:827.7px;top:734px;width:159.66999999999996px;height:21px;line-height:21px;font-size:16px;text-align:right;color:#000;letter-spacing:0.2px;"><span>15,000</span></div>
<div class="t" style="left:993.35px;top:734px;width:160.67000000000007px;height:21px;line-height:21px;font-size:16px;text-align:right;color:#000;letter-spacing:-1.3px;"><span>20</span></div>
<div class="t" style="left:1163.65px;top:734px;width:152px;height:21px;line-height:21px;font-size:16px;text-align:right;color:#000;letter-spacing:-0.3px;"><span>6%</span></div>
<div class="t" style="left:1318.65px;top:734px;width:114.67000000000007px;height:21px;line-height:21px;font-size:16px;text-align:right;color:#000;letter-spacing:-0.15px;"><span>900</span></div>
<div class="t" style="left:1442.5px;top:734px;width:126px;height:21px;line-height:21px;font-size:16px;text-align:right;color:#000;letter-spacing:0.2px;"><span>2046</span></div>
<div class="t" style="left:49.7px;top:755px;width:401px;height:21px;line-height:21px;font-size:16px;text-align:right;color:#000;"><span>Asset 9</span></div>
<div class="t" style="left:637.65px;top:755px;width:187px;height:21px;line-height:21px;font-size:16px;text-align:right;color:#000;letter-spacing:0.1px;"><span>2026</span></div>
<div class="t" style="left:827.7px;top:755px;width:159.66999999999996px;height:21px;line-height:21px;font-size:16px;text-align:right;color:#000;letter-spacing:0.2px;"><span>15,000</span></div>
<div class="t" style="left:993.35px;top:755px;width:160.67000000000007px;height:21px;line-height:21px;font-size:16px;text-align:right;color:#000;letter-spacing:-1.3px;"><span>21</span></div>
<div class="t" style="left:1163.65px;top:755px;width:152px;height:21px;line-height:21px;font-size:16px;text-align:right;color:#000;letter-spacing:-0.3px;"><span>6%</span></div>
<div class="t" style="left:1318.65px;top:755px;width:114.67000000000007px;height:21px;line-height:21px;font-size:16px;text-align:right;color:#000;letter-spacing:-0.15px;"><span>900</span></div>
<div class="t" style="left:1442.5px;top:755px;width:126px;height:21px;line-height:21px;font-size:16px;text-align:right;color:#000;letter-spacing:0.2px;"><span>2047</span></div>
<div class="t" style="left:49.85px;top:776px;width:401px;height:21px;line-height:21px;font-size:16px;text-align:right;color:#000;font-weight:bold;letter-spacing:0.18px;"><span>Total Fixed Cost</span></div>
<div class="t" style="left:826.35px;top:776px;width:159.66999999999996px;height:21px;line-height:21px;font-size:16px;text-align:right;color:#000;font-weight:bold;letter-spacing:0.088px;"><span>2,725,000</span></div>
<svg style="left:829px;top:776px" width="8" height="8" viewBox="0 0 8 8"><path d="M0 0 L7.5 0 L0 7.5 Z" fill="#003c00"/></svg>
<div class="t" style="left:49.5px;top:818px;width:401px;height:21px;line-height:21px;font-size:16px;text-align:right;color:#000;font-weight:bold;letter-spacing:0.225px;"><span>One Time Expenses (CapEx)</span></div>
<div class="t" style="left:454.0px;top:818px;width:181px;height:21px;line-height:21px;font-size:16px;text-align:right;color:#000;font-weight:bold;"><span>Amount</span></div>
<div class="t" style="left:49.85px;top:839px;width:401px;height:21px;line-height:21px;font-size:16px;text-align:right;color:#000;letter-spacing:0.087px;"><span>Seedlings</span></div>
<div style="left:455px;top:839px;width:183px;height:20px;background:#fed999;"></div>
<div style="left:454px;top:838px;width:185px;height:1px;background:#1a1a1a;"></div>
<div style="left:454px;top:859px;width:185px;height:1px;background:#1a1a1a;"></div>
<div style="left:454px;top:838px;width:1px;height:22px;background:#1a1a1a;"></div>
<div style="left:638px;top:838px;width:1px;height:22px;background:#1a1a1a;"></div>
<div class="t" style="left:453.75px;top:839px;width:175.66999999999996px;height:21px;line-height:21px;font-size:16px;text-align:right;color:#000;letter-spacing:0.22px;"><span>60,000</span></div>
<div class="t" style="left:49.7px;top:860px;width:401px;height:21px;line-height:21px;font-size:16px;text-align:right;color:#000;letter-spacing:0.25px;"><span>Civil Work Labour</span></div>
<div style="left:455px;top:860px;width:183px;height:20px;background:#fed999;"></div>
<div style="left:454px;top:859px;width:185px;height:1px;background:#1a1a1a;"></div>
<div style="left:454px;top:880px;width:185px;height:1px;background:#1a1a1a;"></div>
<div style="left:454px;top:859px;width:1px;height:22px;background:#1a1a1a;"></div>
<div style="left:638px;top:859px;width:1px;height:22px;background:#1a1a1a;"></div>
<div class="t" style="left:453.75px;top:860px;width:175.66999999999996px;height:21px;line-height:21px;font-size:16px;text-align:right;color:#000;letter-spacing:0.22px;"><span>60,000</span></div>
<div class="t" style="left:48.25px;top:881px;width:401px;height:21px;line-height:21px;font-size:16px;text-align:right;color:#000;letter-spacing:-0.183px;"><span>Other 1</span></div>
<div style="left:455px;top:881px;width:183px;height:20px;background:#fed999;"></div>
<div style="left:454px;top:880px;width:185px;height:1px;background:#1a1a1a;"></div>
<div style="left:454px;top:901px;width:185px;height:1px;background:#1a1a1a;"></div>
<div style="left:454px;top:880px;width:1px;height:22px;background:#1a1a1a;"></div>
<div style="left:638px;top:880px;width:1px;height:22px;background:#1a1a1a;"></div>
<div class="t" style="left:453.75px;top:881px;width:175.66999999999996px;height:21px;line-height:21px;font-size:16px;text-align:right;color:#000;letter-spacing:0.22px;"><span>60,000</span></div>
<div style="left:455px;top:902px;width:183px;height:4px;background:#fed999;"></div>
<div style="left:454px;top:901px;width:1px;height:5px;background:#1a1a1a;"></div>
<div style="left:638px;top:901px;width:1px;height:5px;background:#1a1a1a;"></div>
<div style="left:32px;top:122px;width:13px;height:18px;border:3px solid #00309c;background:#fff"></div>
<div style="left:46px;top:141px;width:6px;height:6px;background:#00309c;"></div>
<div style="left:1898px;top:60px;width:17px;height:17px;border:1px solid #5a5a5a;background:#fff"></div>
<svg style="left:1902px;top:65px" width="11" height="7" viewBox="0 0 11 7"><path d="M1 6 L10 6 L5.5 1 Z" fill="#000"/></svg>
<div style="left:1898px;top:79px;width:17px;height:144px;border:1px solid #5a5a5a;background:#fff"></div>
<div style="left:1898px;top:887px;width:17px;height:17px;border:1px solid #5a5a5a;background:#fff"></div>
<svg style="left:1902px;top:893px" width="11" height="7" viewBox="0 0 11 7"><path d="M1 1 L10 1 L5.5 6 Z" fill="#000"/></svg>
<svg style="left:29px;top:917px" width="8" height="11" viewBox="0 0 8 11"><path d="M6 1 L6 10 L0.8 5.5 Z" fill="#333"/></svg>
<svg style="left:61px;top:917px" width="8" height="11" viewBox="0 0 8 11"><path d="M1.6 1 L1.6 10 L6.8 5.5 Z" fill="#111"/></svg>
<div style="left:112px;top:910px;width:1px;height:24px;background:#6e6e6e;"></div>
<div style="left:176px;top:910px;width:1px;height:24px;background:#6e6e6e;"></div>
<div style="left:614px;top:910px;width:1px;height:24px;background:#6e6e6e;"></div>
<div style="left:714px;top:910px;width:1px;height:24px;background:#6e6e6e;"></div>
<div style="left:825px;top:910px;width:1px;height:24px;background:#6e6e6e;"></div>
<div style="left:1012px;top:910px;width:1px;height:24px;background:#6e6e6e;"></div>
<div style="left:1188px;top:910px;width:1px;height:24px;background:#6e6e6e;"></div>
<div style="left:236px;top:906px;width:118px;height:1px;background:#dbdbdb;"></div>
<div style="left:236px;top:906px;width:1px;height:29px;background:#555;"></div>
<div style="left:353px;top:906px;width:1px;height:29px;background:#555;"></div>
<div style="left:236px;top:933px;width:118px;height:2px;background:#0c2f14;"></div>
<div class="t" style="left:104.55px;top:910px;width:78px;height:22px;line-height:22px;font-size:17px;text-align:center;color:#000;letter-spacing:0.167px;white-space:pre;"><span>Logo</span></div>
<div class="t" style="left:169.9px;top:910px;width:72px;height:22px;line-height:22px;font-size:17px;text-align:center;color:#000;letter-spacing:-0.05px;white-space:pre;"><span>Title</span></div>
<div class="t" style="left:227.75px;top:910px;width:133px;height:22px;line-height:22px;font-size:17px;text-align:center;color:#000;font-weight:bold;letter-spacing:0.05px;white-space:pre;"><span>Input Sheet</span></div>
<div class="t" style="left:352.1px;top:910px;width:263px;height:22px;line-height:22px;font-size:17px;text-align:center;color:#000;letter-spacing:0.128px;white-space:pre;"><span>Startup Investment Summary</span></div>
<div class="t" style="left:607.8px;top:910px;width:112px;height:22px;line-height:22px;font-size:17px;text-align:center;color:#000;letter-spacing:0.4px;white-space:pre;"><span>Valuation</span></div>
<div class="t" style="left:707.8px;top:910px;width:123px;height:22px;line-height:22px;font-size:17px;text-align:center;color:#000;letter-spacing:0.2px;white-space:pre;"><span>Dashboard</span></div>
<div class="t" style="left:820.82px;top:910px;width:193px;height:22px;line-height:22px;font-size:17px;text-align:center;color:#000;letter-spacing:-0.241px;white-space:pre;"><span>Revenue Breakdown</span></div>
<div class="t" style="left:1006.5px;top:910px;width:181px;height:22px;line-height:22px;font-size:17px;text-align:center;color:#000;letter-spacing:0.173px;white-space:pre;"><span>Income Statement</span></div>
<div class="t" style="left:1183.88px;top:910px;width:130px;height:22px;line-height:22px;font-size:17px;text-align:center;color:#000;letter-spacing:-0.575px;white-space:pre;"><span>Cash Flow S</span></div>
<div class="t" style="left:1300.15px;top:910px;width:20px;height:22px;line-height:22px;font-size:17px;text-align:center;color:#000;letter-spacing:0.75px;"><span>...</span></div>
<svg style="left:1330px;top:911px" width="24" height="24" viewBox="0 0 24 24"><circle cx="12" cy="11.8" r="9.3" fill="none" stroke="#0a0a0a" stroke-width="1.3"/><path d="M7.2 12 H16.8 M12 7.2 V16.8" stroke="#0a0a0a" stroke-width="2"/></svg>
<div style="left:1372px;top:916px;width:3px;height:3px;background:#111;"></div>
<div style="left:1372px;top:921px;width:3px;height:3px;background:#111;"></div>
<div style="left:1372px;top:926px;width:3px;height:3px;background:#111;"></div>
<div style="left:1392px;top:913px;width:17px;height:17px;border:1px solid #5a5a5a;background:#fff"></div>
<svg style="left:1397px;top:917px" width="7" height="11" viewBox="0 0 7 11"><path d="M6 1 L6 10 L1 5.5 Z" fill="#000"/></svg>
<div style="left:1411px;top:913px;width:268px;height:17px;border:1px solid #5a5a5a;background:#fff"></div>
<div style="left:1873px;top:913px;width:17px;height:17px;border:1px solid #5a5a5a;background:#fff"></div>
<svg style="left:1879px;top:917px" width="7" height="11" viewBox="0 0 7 11"><path d="M1 1 L1 10 L6 5.5 Z" fill="#000"/></svg>
<div style="left:0px;top:938px;width:1920px;height:1px;background:#ababab;"></div>
<div class="t" style="left:14.25px;top:944px;width:60px;height:18px;line-height:18px;font-size:12.3px;text-align:left;color:#1a1a1a;letter-spacing:-0.125px;"><span>Ready</span></div>
<svg style="left:76px;top:943px" width="18" height="18" viewBox="0 0 18 18"><rect x="2.5" y="6.3" width="13" height="9.2" fill="#f2f2f2" stroke="#0a0a0a" stroke-width="1"/><rect x="8" y="2.1" width="8" height="3.9" fill="#0a0a0a"/><circle cx="4.4" cy="4.3" r="3.6" fill="#0a0a0a"/><path d="M5.1 7.6 H13.2 M5.1 10.6 H13.2 M5.1 13.4 H13.2" stroke="#0a0a0a" stroke-width="0.9" stroke-dasharray="1.9 1.1"/></svg>
<svg style="left:114px;top:942px" width="24" height="22" viewBox="0 0 24 22"><path d="M8.2 3.2 A7.2 7.2 0 0 0 9.6 17.5" fill="none" stroke="#0a0a0a" stroke-width="1.4" stroke-dasharray="3.6 1.7"/><path d="M9.4 2 V9.6 M7.4 7.6 L9.4 9.9 L11.4 7.6" stroke="#0a0a0a" stroke-width="1.2" fill="none"/><path d="M9.4 8 H17 M15.2 6 L17.3 8 L15.2 10" stroke="#0a0a0a" stroke-width="1.2" fill="none"/><path d="M11.6 11.6 L20.6 19.6 M20.2 12 L11.6 19.6" stroke="#0a0a0a" stroke-width="2.3" stroke-linecap="butt"/></svg>
<div class="t" style="left:138.15px;top:944px;width:200px;height:18px;line-height:18px;font-size:12.3px;text-align:left;color:#1a1a1a;font-weight:bold;letter-spacing:0.188px;"><span>Accessibility: Investigate</span></div>
<svg style="left:1407px;top:942px" width="24" height="22" viewBox="0 0 24 22"><rect x="2.1" y="1" width="18.8" height="12.8" rx="0.7" fill="#050505"/><path d="M6 17.9 H10.8" stroke="#050505" stroke-width="1.5"/><circle cx="15.5" cy="14.6" r="5.7" fill="#dbdbdb"/><circle cx="15.5" cy="14.6" r="3.9" fill="#050505"/><circle cx="15.5" cy="14.6" r="4.5" fill="none" stroke="#050505" stroke-width="1.9" stroke-dasharray="1.9 1.634" stroke-dashoffset="0.9"/><rect x="14.1" y="13.2" width="2.8" height="2.8" fill="#f4f4f4"/></svg>
<div class="t" style="left:1430.6px;top:944px;width:120px;height:18px;line-height:18px;font-size:12.3px;text-align:left;color:#1a1a1a;letter-spacing:0.213px;"><span>Display Settings</span></div>
<div style="left:1547px;top:939px;width:50px;height:26px;background:#9b9b9b;"></div>
<svg style="left:1565px;top:945px" width="14" height="14" viewBox="0 0 14 14"><rect x="0" y="0" width="14" height="14" fill="#e9e9e9"/><rect x="0" y="2" width="13.2" height="10" fill="#050505"/><rect x="1" y="3" width="3" height="2" fill="#fff"/><rect x="1" y="6" width="3" height="2" fill="#fff"/><rect x="1" y="9" width="3" height="2" fill="#fff"/><rect x="5" y="3" width="3" height="2" fill="#fff"/><rect x="5" y="6" width="3" height="2" fill="#fff"/><rect x="5" y="9" width="3" height="2" fill="#fff"/><rect x="9" y="3" width="3" height="2" fill="#fff"/><rect x="9" y="6" width="3" height="2" fill="#fff"/><rect x="9" y="9" width="3" height="2" fill="#fff"/></svg>
<svg style="left:1616px;top:946px" width="12" height="12" viewBox="0 0 12 12"><rect x="0" y="1" width="12" height="10" fill="#050505"/><rect x="1.3" y="2.3" width="9.4" height="7.4" fill="#dbdbdb"/><rect x="2" y="2.3" width="0.8" height="7.4" fill="#6a6a6a"/><rect x="9.2" y="2.3" width="0.8" height="7.4" fill="#6a6a6a"/><rect x="3.5" y="3.5" width="5" height="5" fill="none" stroke="#050505" stroke-width="1"/><rect x="4" y="5.5" width="4" height="1" fill="#050505"/></svg>
<svg style="left:1666px;top:946px" width="12" height="12" viewBox="0 0 12 12"><rect x="0" y="1" width="12" height="10" fill="#050505"/><rect x="2" y="2" width="2" height="5" fill="#ececec"/><rect x="6" y="2" width="2" height="5" fill="#ececec"/><path d="M9.3 2 H11 V9.8 H1.2 V8.2 H9.3 Z" fill="#ececec"/></svg>
<div style="left:1704px;top:951px;width:10px;height:1px;background:#1a1a1a;"></div>
<div style="left:1720px;top:952px;width:125px;height:1px;background:#1a1a1a;"></div>
<div style="left:1780px;top:945px;width:6px;height:14px;background:#151515;"></div>
<div style="left:1851px;top:951px;width:10px;height:1px;background:#1a1a1a;"></div>
<div style="left:1855px;top:947px;width:1px;height:9px;background:#1a1a1a;"></div>
<div class="t" style="left:1870.5px;top:944px;width:40px;height:18px;line-height:18px;font-size:12.3px;text-align:right;color:#1a1a1a;letter-spacing:-0.333px;width:37px;"><span>100%</span></div>
<div style="left:0px;top:965px;width:1920px;height:1px;background:#f3f3f3;"></div>
</body></html>
